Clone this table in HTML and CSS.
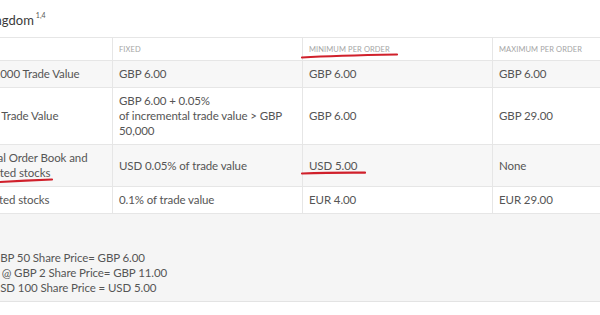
FILE: index.html
```html
<!DOCTYPE html>
<html>
<head>
	<title>Commission Rates - United Kingdom</title>
	<link rel="stylesheet" href="styles.css">
</head>
<body>
	<div class="page">
		<h3 class="market">United Kingdom<sup>1,4</sup></h3>
		<table class="fees">
			<thead>
				<tr>
					<th></th>
					<th>Fixed</th>
					<th>Minimum per order</th>
					<th>Maximum per order</th>
				</tr>
			</thead>
			<tbody>
				<tr class="shade">
					<td>Up to GBP 50,000 Trade Value</td>
					<td>GBP 6.00</td>
					<td>GBP 6.00</td>
					<td>GBP 6.00</td>
				</tr>
				<tr>
					<td>&gt; GBP 50,000 Trade Value</td>
					<td>GBP 6.00 + 0.05%<br>of incremental trade value &gt; GBP<br>50,000</td>
					<td>GBP 6.00</td>
					<td>GBP 29.00</td>
				</tr>
				<tr class="shade">
					<td class="sub">International Order Book and<br>other US listed stocks</td>
					<td>USD 0.05% of trade value</td>
					<td>USD 5.00</td>
					<td>None</td>
				</tr>
				<tr>
					<td>EU or EFTA listed stocks</td>
					<td>0.1% of trade value</td>
					<td>EUR 4.00</td>
					<td>EUR 29.00</td>
				</tr>
			</tbody>
		</table>
		<div class="examples">
			<p>50 Shares @ GBP 50 Share Price= GBP 6.00</p>
			<p>30,000 Shares @ GBP 2 Share Price= GBP 11.00</p>
			<p>50 Shares @ USD 100 Share Price = USD 5.00</p>
		</div>
	</div>

	<!-- red pen marks on top of the table -->
	<svg class="marks" width="600" height="315" viewBox="0 0 600 315">
		<path d="M302 57.5 Q335 55.5 397 54.5" />
		<path d="M0 182 Q25 180.5 52 179.5" />
		<path d="M302 173.5 Q330 172.5 365 172.7" />
	</svg>
</body>
</html>
```

FILE: styles.css
```css
body {
	margin: 0;
	overflow: hidden;
	position: relative;
	background-color: #fff;
	font-family: 'Lato', 'Open Sans', sans-serif;
	color: #555;
}
.page {
	margin-left: -78px;
	width: 770px;
}
.market {
	height: 20px;
	margin: 0 0 7px 0;
	padding: 10px 0 0 19px;
	font-size: 13px;
	font-weight: normal;
	line-height: 20px;
	color: #3a3a3a;
}
.market sup {
	font-size: 7px;
	line-height: 0;
	vertical-align: 7px;
	margin-left: 2px;
	color: #555;
}
.fees {
	width: 760px;
	border-collapse: collapse;
	table-layout: fixed;
	font-size: 11.5px;
	letter-spacing: -0.1px;
}
.fees th,
.fees td {
	width: 190px;
	box-sizing: border-box;
	border: 1px solid #e6e6e6;
	text-align: left;
	vertical-align: middle;
}
.fees th {
	height: 23px;
	padding: 0 6px;
	font-size: 7.5px;
	font-weight: normal;
	text-transform: uppercase;
	color: #a5a5a5;
	letter-spacing: 0.1px;
}
.fees td {
	padding: 5px 6px 6px 6px;
	line-height: 15px;
}
.fees td.sub {
	padding-left: 20px;
}
.fees .shade td {
	background-color: #f7f7f7;
}
.examples {
	width: 760px;
	box-sizing: border-box;
	padding: 36px 6px 6px 6px;
	background-color: #f5f5f5;
	border-bottom: 1px solid #e3e3e3;
	font-size: 11.5px;
	letter-spacing: -0.1px;
	line-height: 15px;
}
.examples p {
	margin: 0;
}
.marks {
	position: absolute;
	top: 0;
	left: 0;
}
.marks path {
	fill: none;
	stroke: #d0202b;
	stroke-width: 2.2;
	stroke-linecap: round;
}
```
